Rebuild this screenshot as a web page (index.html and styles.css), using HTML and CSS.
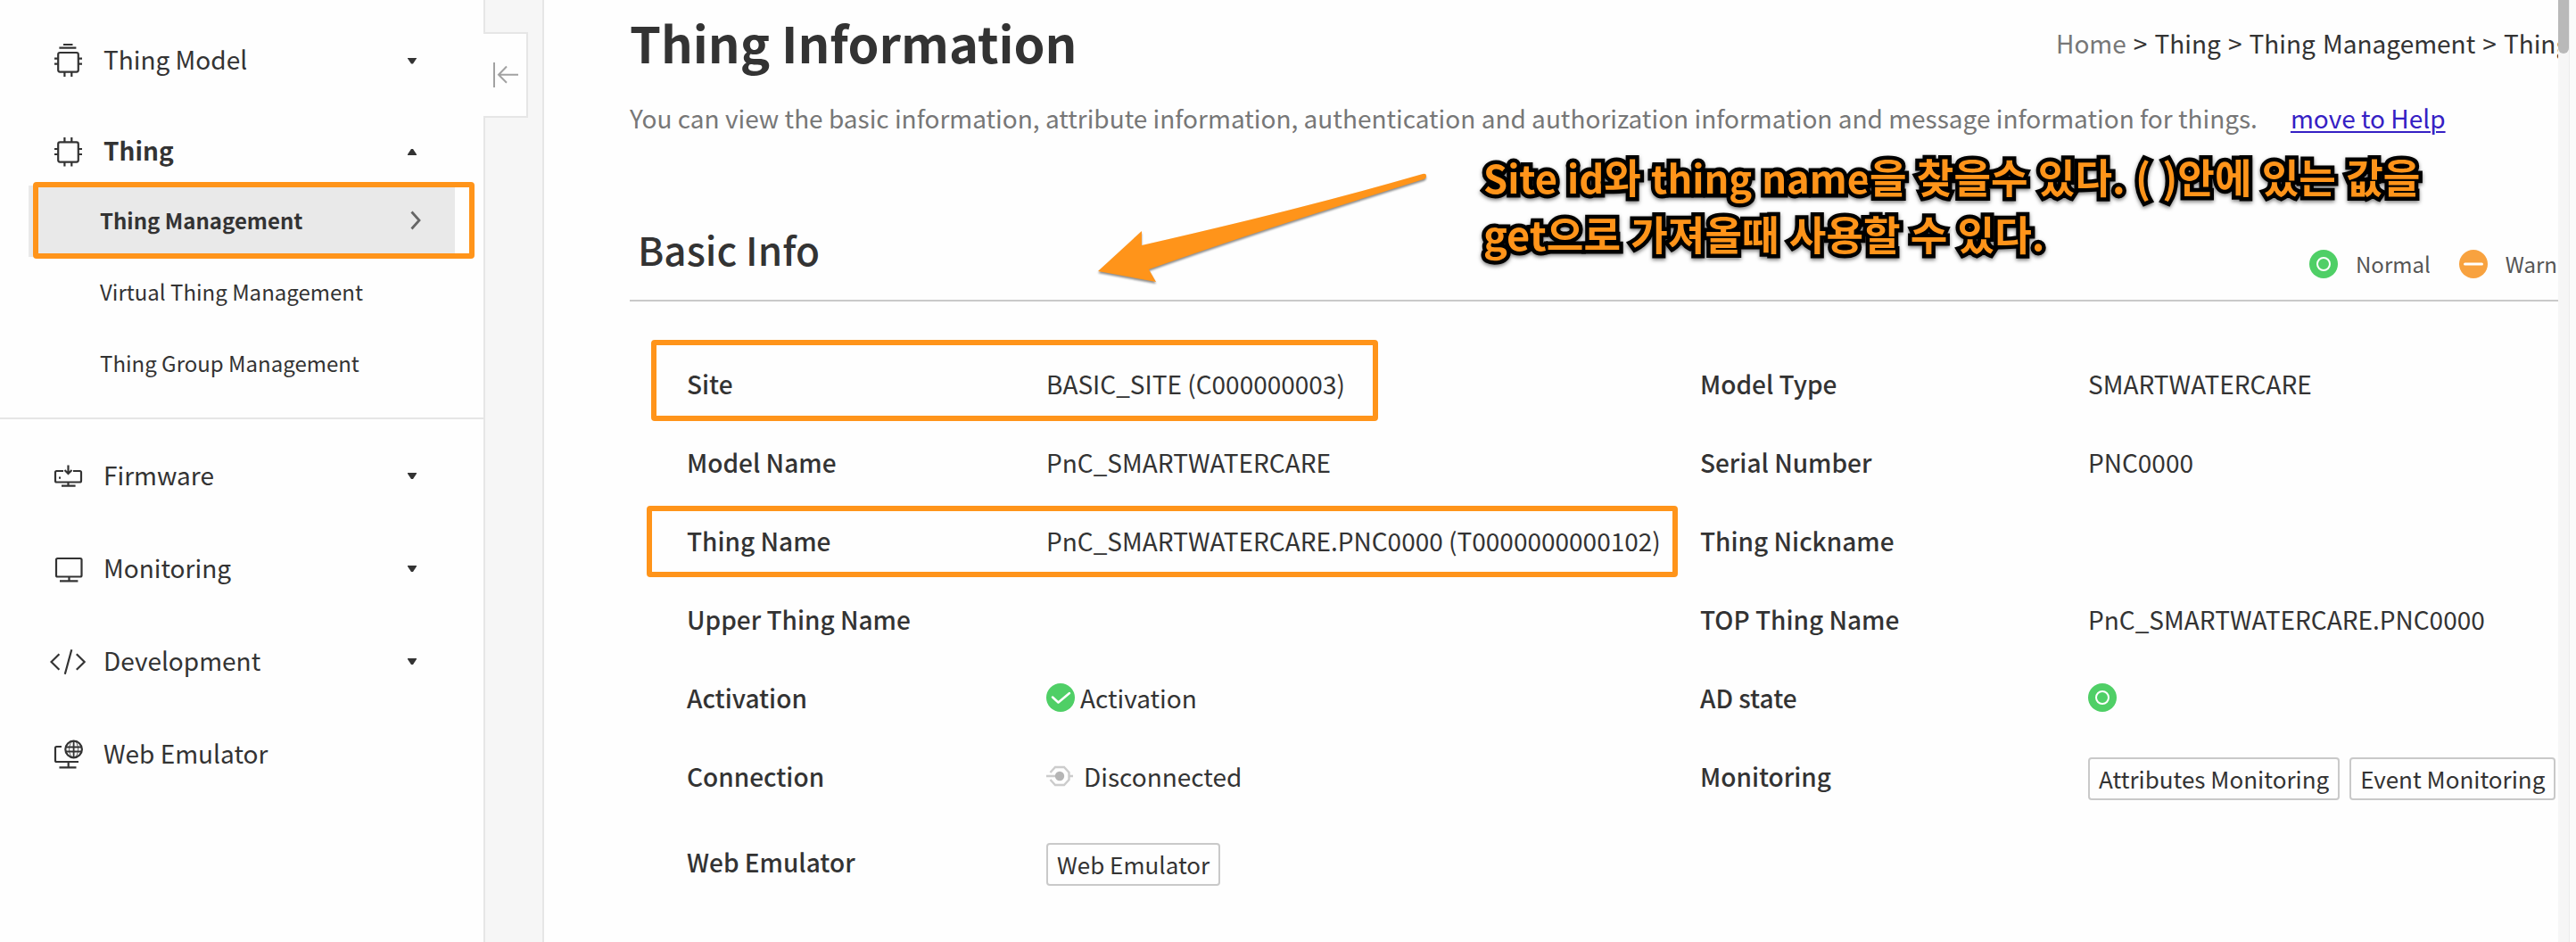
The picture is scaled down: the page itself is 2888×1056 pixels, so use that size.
FILE: index.html
```html
<!DOCTYPE html>
<html lang="en">
<head>
<meta charset="utf-8">
<title>Thing Information</title>
<link rel="stylesheet" href="styles.css">
</head>
<body>
<div class="app">
  <aside class="sidebar">
    <nav class="nav">
      <a class="item item-model"><svg class="icon" viewBox="0 0 40 44"><rect x="9.2" y="15" width="22.6" height="21.6" rx="2"/><path d="M15 6h10.500M10.400 9.700h19M5 21.700h4M5 27.700h4M32 21.700h4M32 27.700h4M16.400 37v5M24.300 37v5"/></svg><span class="label">Thing Model</span><i class="caret"></i></a>
      <a class="item item-thing"><svg class="icon" viewBox="0 0 40 44"><rect x="9.200" y="13.400" width="22.600" height="22.200" rx="2"/><path d="M5 21h4M5 27h4M32 21h4M32 27h4M16.400 8v5M24.300 8v5M16.400 36v4.500M24.300 36v4.500"/></svg><span class="label">Thing</span><i class="caret caret-up"></i></a>
      <div class="sub">
        <a class="subitem current"><span>Thing Management</span><svg class="chev" viewBox="0 0 12 22"><path d="M1.500 1.500L10 11l-8.500 9.500"/></svg></a>
        <a class="subitem">Virtual Thing Management</a>
        <a class="subitem">Thing Group Management</a>
      </div>
      <div class="group">
        <a class="item"><svg class="icon" viewBox="0 0 40 44"><path d="M15 18H7.500q-1.500 0-1.500 1.500V29q0 1.500 1.500 1.500h26q1.500 0 1.500-1.500v-9.500q0-1.500-1.500-1.500H26M20.500 11.500v9M16.500 17l4 4 4-4M20.500 30.500v4M13 34.700h15.600M10 25.700h2"/></svg><span class="label">Firmware</span><i class="caret"></i></a>
        <a class="item"><svg class="icon" viewBox="0 0 40 44"><rect x="7" y="12" width="28.500" height="20.500" rx="1.500"/><path d="M21.500 33v4M11 37.300h20.400"/></svg><span class="label">Monitoring</span><i class="caret"></i></a>
        <a class="item"><svg class="icon" viewBox="0 0 40 44"><path d="M10.400 15.300L1.500 24l8.900 8.700M29.800 15.300L38.700 24l-8.900 8.700M24.300 10.300l-7.500 27.400"/></svg><span class="label">Development</span><i class="caret"></i></a>
        <a class="item"><svg class="icon" viewBox="0 0 40 44"><path d="M13 15H7.500Q6 15 6 16.500V30.500Q6 32 7.500 32H32M20.700 32v6M10.500 38.300h19"/><circle cx="26.600" cy="18" r="9.300"/><path class="thin" d="M26.600 8.700v18.600M18 15.500h17.200M18 20.500h17.200"/><ellipse class="hair" cx="26.600" cy="18" rx="5" ry="9.300"/></svg><span class="label">Web Emulator</span></a>
      </div>
    </nav>
  </aside>
  <div class="gutter">
    <button class="toggle"><svg viewBox="0 0 30 30"><path d="M2 1v28M29 14.700H7M16 5.500L7 14.700l9 9"/></svg></button>
  </div>
  <main class="main">
    <header class="head">
      <h1>Thing Information</h1>
      <div class="crumbs"><span class="home">Home</span> &gt; Thing &gt; Thing Management &gt; Thing</div>
    </header>
    <p class="desc"><span>You can view the basic information, attribute information, authentication and authorization information and message information for things.</span><a class="help">move to Help</a></p>
    <div class="section-head">
      <h2>Basic Info</h2>
      <div class="legend">
        <svg class="dot" viewBox="0 0 32 32"><circle cx="16" cy="16" r="16" fill="#4fcf66"/><circle cx="16" cy="16" r="7" fill="none" stroke="#fff" stroke-width="2"/></svg><span class="legend-normal">Normal</span>
        <svg class="dot" viewBox="0 0 32 32"><circle cx="16" cy="16" r="16" fill="#f8a23f"/><path d="M6.500 16h19" stroke="#fff" stroke-width="3" stroke-linecap="round"/></svg><span class="legend-warn">Warn</span>
      </div>
    </div>
    <dl class="info">
      <dt>Site</dt><dd>BASIC_SITE (C000000003)</dd><dt>Model Type</dt><dd>SMARTWATERCARE</dd>
      <dt>Model Name</dt><dd>PnC_SMARTWATERCARE</dd><dt>Serial Number</dt><dd>PNC0000</dd>
      <dt>Thing Name</dt><dd>PnC_SMARTWATERCARE.PNC0000 (T0000000000102)</dd><dt>Thing Nickname</dt><dd></dd>
      <dt>Upper Thing Name</dt><dd></dd><dt>TOP Thing Name</dt><dd>PnC_SMARTWATERCARE.PNC0000</dd>
      <dt>Activation</dt><dd><svg class="dot" viewBox="0 0 32 32"><circle cx="16" cy="16" r="16" fill="#4fcf66"/><path d="M7 15.500l6.500 6L26 11" fill="none" stroke="#fff" stroke-width="2.500" stroke-linecap="round" stroke-linejoin="round"/></svg><span class="state">Activation</span></dd><dt>AD state</dt><dd><svg class="dot" viewBox="0 0 32 32"><circle cx="16" cy="16" r="16" fill="#4fcf66"/><circle cx="16" cy="16" r="7" fill="none" stroke="#fff" stroke-width="2"/></svg></dd>
      <dt>Connection</dt><dd><svg class="plug" viewBox="0 0 30 24"><path d="M4.500 8L10 2h10l5.500 6v8L20 22H10L4.500 16M0 12h10M25 12h5" fill="none" stroke="#ccc" stroke-width="2.400"/><circle cx="15" cy="12" r="5.200" fill="#b5b5b5"/></svg><span class="state state-off">Disconnected</span></dd><dt>Monitoring</dt><dd class="buttons"><button class="btn">Attributes Monitoring</button><button class="btn">Event Monitoring</button></dd>
      <dt class="last">Web Emulator</dt><dd class="last"><button class="btn">Web Emulator</button></dd>
    </dl>
  </main>
  <div class="scroll"><div class="thumb"></div></div>
</div>
<div class="mark mark-menu"></div>
<div class="mark mark-site"></div>
<div class="mark mark-name"></div>
<svg class="arrow" viewBox="0 0 380 140"><path d="M11 114L60 69V85Q240 44 375 5Q379 4 379 7Q379 10 376 11Q180 72 68 112L76 126Z"/></svg>
<p class="note"><span class="latin">Site id</span>와 <span class="latin">thing name</span>을 찾을수 있다. <span class="paren">( </span>)안에 있는 값을<br>get으로 가져올때 사용할 수 있다.</p>
</body>
</html>
```
FILE: styles.css
```css
* { box-sizing: border-box; }
body {
  margin: 0;
  width: 2888px;
  height: 1056px;
  overflow: hidden;
  position: relative;
  background: #fefefe;
  color: #333;
  font: 400 28px/40px "Noto Sans CJK KR", sans-serif;
}
h1, h2, p, dl, dd { margin: 0; }
button { font: inherit; color: inherit; padding: 0; }
.app { display: flex; height: 1056px; }

.sidebar { width: 544px; border-right: 2px solid #e6e6e6; padding-top: 14px; }
.item { display: flex; align-items: center; height: 104px; padding: 0 75px 1px 56px; }
.item-model { margin-bottom: 10px; padding-bottom: 0; }
.item-thing { height: 80px; padding-bottom: 0; font-weight: 700; }
.icon { width: 40px; height: 44px; margin-right: 20px; fill: none; stroke: #333; stroke-width: 2.2; }
.thin { stroke-width: 1.8; }
.hair { stroke-width: .8; }
.label { flex: 1; }
.caret {
  width: 10px;
  height: 7px;
  margin-top: 4px;
  background: #333;
  clip-path: polygon(0 0, 100% 0, 100% 15%, 60% 100%, 40% 100%, 0 15%);
}
.caret-up { transform: scaleY(-1); }
.sub { padding-bottom: 20px; border-bottom: 2px solid #e6e6e6; font-size: 24px; }
.subitem { display: flex; align-items: center; justify-content: space-between; height: 80px; margin: 0 32px; padding: 0 38px 3px 80px; }
.current { background: #e9e9e9; font-weight: 700; }
.chev { width: 12px; height: 22px; fill: none; stroke: #666; stroke-width: 2.8; }
.group { padding-top: 10px; }

.gutter { width: 66px; padding-top: 36px; background: #f6f6f6; border-right: 2px solid #e6e6e6; }
.toggle {
  display: flex;
  align-items: center;
  width: 50px;
  height: 96px;
  margin-left: -2px;
  padding-left: 10px;
  background: #fefefe;
  border: 2px solid #e6e6e6;
  border-left: 0;
}
.toggle svg { width: 30px; height: 30px; fill: none; stroke: #a2a2a2; stroke-width: 2; }

.main { width: 2258px; padding-left: 96px; overflow: hidden; white-space: nowrap; }
.head { display: flex; height: 96px; }
h1 { flex: none; width: 1599px; padding-top: 7px; font-size: 56px; font-weight: 700; line-height: 80px; }
.crumbs { padding-top: 28px; word-spacing: 1.8px; }
.home { color: #777; }
.desc { display: flex; gap: 37px; height: 96px; padding-top: 16px; color: #777; }
.help { color: #3520c4; text-decoration: underline; text-decoration-thickness: 2px; text-underline-offset: 3px; }
.section-head { display: flex; height: 146px; border-bottom: 2px solid #c9c9c9; }
h2 { width: 1883px; padding: 57px 0 0 9px; font-size: 44px; font-weight: 500; line-height: 60px; }
.legend { display: flex; align-items: center; height: 32px; margin-top: 88px; font-size: 24px; color: #555; }
.dot { width: 32px; height: 32px; flex: none; }
.legend-normal { margin: 0 32px 0 20px; }
.legend-warn { margin-left: 20px; }
.info {
  display: grid;
  grid-template-columns: 403px 733px 435px 520px;
  grid-auto-rows: 88px;
  padding: 48px 0 0 64px;
}
dt, dd { display: flex; align-items: center; height: 88px; }
dt { font-weight: 500; }
.state { margin-left: 6px; }
.state-off { margin-left: 12px; }
.plug { width: 30px; height: 24px; }
.last { height: 104px; }
.btn {
  height: 48px;
  margin: 6px 11px 0 0;
  padding: 0 10px;
  background: #fefefe;
  border: 2px solid #c9c9c9;
  border-radius: 4px;
  font-size: 26px;
  line-height: 44px;
}
.scroll { width: 20px; background: linear-gradient(90deg, #f6f6f6 12px, #ececec 12px, #ececec 13px, #fafafa 13px); }
.thumb { width: 12px; height: 60px; background: #b9b9b9; border-radius: 0 0 6px 6px; }

/* Callouts drawn over the page */
.mark { position: absolute; border: 6px solid #ff941a; border-radius: 4px; }
.mark-menu { left: 37px; top: 204px; width: 495px; height: 86px; }
.mark-site { left: 730px; top: 381px; width: 815px; height: 91px; }
.mark-name { left: 725px; top: 567px; width: 1156px; height: 80px; }
.arrow { position: absolute; left: 1220px; top: 190px; width: 380px; height: 140px; overflow: visible; fill: #ff941a; filter: drop-shadow(0 2px 1px rgba(0, 0, 0, .45)); }
.note {
  position: absolute;
  left: 1663px;
  top: 166px;
  font-size: 45.2px;
  font-weight: 700;
  line-height: 63px;
  word-spacing: 1px;
  color: #ff941a;
  white-space: nowrap;
  -webkit-text-stroke: 9px #000;
  paint-order: stroke fill;
  stroke-linejoin: round;
  filter: drop-shadow(0 2px 2px rgba(0, 0, 0, .5));
}
.latin { font-size: 43.5px; }
.paren { letter-spacing: 1px; }
```
